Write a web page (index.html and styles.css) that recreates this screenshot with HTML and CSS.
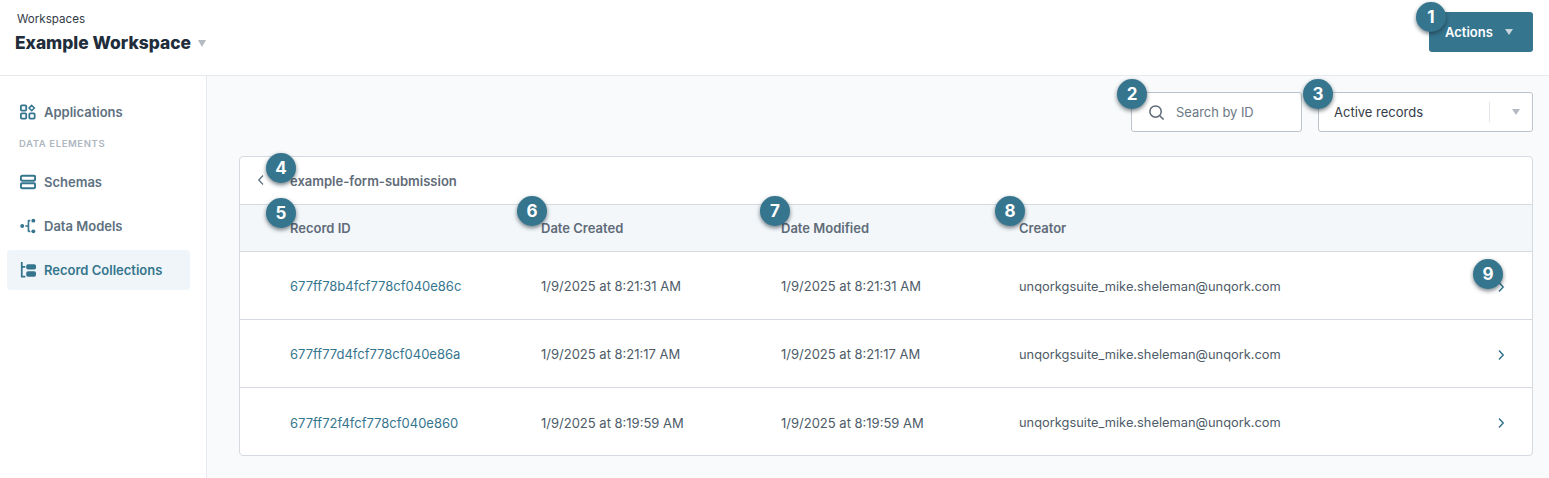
FILE: index.html
```html
<!DOCTYPE html>
<html lang="en">
<head>
<meta charset="utf-8">
<title>Record Collections</title>
<link rel="stylesheet" href="styles.css">
</head>
<body>
<header class="topbar">
  <div class="workspace">
    <div class="crumb">Workspaces</div>
    <div class="ws-name">Example Workspace <span class="caret caret-grey"></span></div>
  </div>
  <div class="anchor">
    <button class="actions">Actions <span class="caret caret-light"></span></button>
    <span class="badge b1">1</span>
  </div>
</header>
<div class="shell">
  <nav class="sidebar">
    <a class="nav-item">
      <svg class="nav-icon" viewBox="0 0 18 18" fill="none" stroke="currentColor" stroke-width="2"><rect x="1" y="1.5" width="6" height="6" rx="1"/><path d="M13.2 1.6l3 3-3 3-3-3z" stroke-width="1.7"/><rect x="1" y="10.5" width="6" height="6" rx="1"/><rect x="10.5" y="10.5" width="6" height="6" rx="1"/></svg>
      Applications
    </a>
    <div class="nav-label">DATA ELEMENTS</div>
    <a class="nav-item">
      <svg class="nav-icon" viewBox="0 0 18 18" fill="none" stroke="currentColor" stroke-width="2.2"><rect x="1" y="2" width="16" height="5.5" rx="1.5"/><rect x="1" y="10.5" width="16" height="5.5" rx="1.5"/></svg>
      Schemas
    </a>
    <a class="nav-item">
      <svg class="nav-icon" viewBox="0 0 18 18" fill="currentColor"><circle cx="2.5" cy="9" r="2.2"/><path d="M6 9h3.5M9.5 2.5v13M9.5 3h2M9.5 15h2" stroke="currentColor" stroke-width="1.8" fill="none"/><circle cx="15" cy="3" r="2.2"/><circle cx="15" cy="15" r="2.2"/></svg>
      Data Models
    </a>
    <a class="nav-item active">
      <svg class="nav-icon" viewBox="0 0 18 18" fill="currentColor"><path d="M2 0v16.5h4M2 5.5h4" fill="none" stroke="currentColor" stroke-width="2"/><rect x="7" y="2.5" width="11" height="6" rx="2"/><rect x="7" y="10.5" width="11" height="6" rx="2"/></svg>
      Record Collections
    </a>
  </nav>
  <main class="content">
    <div class="toolbar">
      <div class="anchor">
        <div class="search">
          <svg class="search-icon" viewBox="0 0 18 18" fill="none" stroke="currentColor" stroke-width="1.6"><circle cx="8" cy="8" r="6"/><path d="M12.5 12.5l4 4"/></svg>
          <span>Search by ID</span>
        </div>
        <span class="badge b2">2</span>
      </div>
      <div class="anchor">
        <div class="select">
          <span class="select-value">Active records</span>
          <span class="select-sep"></span>
          <span class="caret caret-grey"></span>
        </div>
        <span class="badge b3">3</span>
      </div>
    </div>
    <section class="card">
      <div class="title-row">
        <svg class="back" viewBox="0 0 8 12" fill="none" stroke="currentColor" stroke-width="1.3"><path d="M6 1.5L1.8 6 6 10.5"/></svg>
        <span class="title">example-form-submission</span>
        <span class="badge b4">4</span>
      </div>
      <div class="row head">
        <span>Record ID</span><span>Date Created</span><span>Date Modified</span><span>Creator</span>
        <span class="badge b5">5</span><span class="badge b6">6</span><span class="badge b7">7</span><span class="badge b8">8</span>
      </div>
      <div class="row data">
        <a class="rec">677ff78b4fcf778cf040e86c</a><span>1/9/2025 at 8:21:31 AM</span><span>1/9/2025 at 8:21:31 AM</span><span class="mail">unqorkgsuite_mike.sheleman@unqork.com</span>
        <svg class="chev" viewBox="0 0 8 12" fill="none" stroke="currentColor" stroke-width="1.5"><path d="M2 1.5L6.2 6 2 10.5"/></svg>
        <span class="badge b9">9</span>
      </div>
      <div class="row data">
        <a class="rec">677ff77d4fcf778cf040e86a</a><span>1/9/2025 at 8:21:17 AM</span><span>1/9/2025 at 8:21:17 AM</span><span class="mail">unqorkgsuite_mike.sheleman@unqork.com</span>
        <svg class="chev" viewBox="0 0 8 12" fill="none" stroke="currentColor" stroke-width="1.5"><path d="M2 1.5L6.2 6 2 10.5"/></svg>
      </div>
      <div class="row data last">
        <a class="rec">677ff72f4fcf778cf040e860</a><span>1/9/2025 at 8:19:59 AM</span><span>1/9/2025 at 8:19:59 AM</span><span class="mail">unqorkgsuite_mike.sheleman@unqork.com</span>
        <svg class="chev" viewBox="0 0 8 12" fill="none" stroke="currentColor" stroke-width="1.5"><path d="M2 1.5L6.2 6 2 10.5"/></svg>
      </div>
    </section>
  </main>
</div>
</body>
</html>
```
FILE: styles.css
```css
* { box-sizing: border-box; }
html, body { margin: 0; height: 100%; overflow: hidden; }
body { font-family: Inter, "Liberation Sans", sans-serif; background: #fff; color: #2a3644; }

.topbar { height: 76px; display: flex; justify-content: space-between; align-items: flex-start; padding: 12px 16px 0 15px; border-bottom: 1px solid #e6e9ed; background: #fff; }
.crumb { font-size: 11.6px; line-height: 14px; margin-left: 2px; color: #333c47; }
.ws-name { font-size: 17.4px; line-height: 22px; margin-top: 6px; font-weight: 800; color: #212d3b; display: flex; align-items: center; gap: 7px; }
.ws-name .caret { border-top-width: 7px; margin-top: 1px; }

.caret { display: inline-block; width: 0; height: 0; border-left: 4.5px solid transparent; border-right: 4.5px solid transparent; border-top: 6px solid #b3bac2; }
.caret-light { border-top-color: #c9d6dd; }

.anchor { position: relative; }
.actions { width: 104px; height: 40px; border: 0; border-radius: 3px; background: #36758e; color: #fff; font: 600 13px Inter, "Liberation Sans", sans-serif; display: flex; align-items: center; padding: 0 0 0 16px; gap: 12px; }

.shell { display: flex; height: 402px; }
.sidebar { width: 207px; flex: none; background: #fff; border-right: 1px solid #e6e9ed; padding: 16px 16px 0 7px; display: flex; flex-direction: column; }
.nav-item { height: 40px; margin-bottom: 4px; border-radius: 4px; display: flex; align-items: center; gap: 8px; padding-left: 13px; font-size: 13px; font-weight: 600; color: #5d7080; }
.nav-item .nav-icon { width: 16px; height: 16px; color: #36758e; flex: none; }
.nav-item.active { background: #eff5f8; color: #36758e; }
.nav-label { font-size: 9.5px; font-weight: 600; letter-spacing: .6px; line-height: 11px; color: #aeb6bf; padding-left: 12px; margin: 2px 0 13px; }

.content { flex: 1; background: #f8fafb; padding: 16px 16px 0 32px; }
.toolbar { display: flex; justify-content: flex-end; gap: 16px; height: 40px; margin-bottom: 24px; }
.search { width: 171px; height: 40px; background: #fff; border: 1px solid #bcc3cb; border-radius: 3px; display: flex; align-items: center; padding-left: 16px; gap: 11px; font-size: 12.9px; color: #6b7785; }
.search-icon { width: 17px; height: 17px; color: #5d6875; }
.select { width: 215px; height: 40px; background: #fff; border: 1px solid #bcc3cb; border-radius: 3px; display: flex; align-items: center; padding-left: 15px; font-size: 13px; color: #333c47; }
.select-value { width: 155px; }
.select-sep { width: 1px; height: 20px; background: #e3e6ea; margin-right: 22px; }

.card { background: #fff; border: 1px solid #d5dae0; border-radius: 4px; height: 300px; }
.title-row { position: relative; height: 48px; display: flex; align-items: center; padding-left: 17px; border-bottom: 1px solid #d5dae0; }
.back { width: 8px; height: 12px; color: #5d7080; margin-top: -1px; }
.title { margin: 1px 0 0 25px; font-size: 13px; font-weight: 600; color: #5f6b78; }

.row { position: relative; display: grid; grid-template-columns: 251px 240px 238px 1fr; align-items: center; padding-left: 50px; font-size: 13px; color: #4e5b68; }
.head { height: 47px; background: #f3f7fa; border-bottom: 1px solid #d5dae0; font-weight: 600; color: #5f6b78; }
.data { height: 68px; border-bottom: 1px solid #d5dae0; padding-top: 1px; }
.data.last { border-bottom: 0; }
.rec { color: #36758e; }
.mail { font-size: 12.85px; }
.chev { position: absolute; right: 27px; top: 29px; width: 8px; height: 12px; color: #36758e; }

.badge { position: absolute; z-index: 2; width: 30px; height: 30px; border-radius: 50%; background: #36758e; color: #fff; font-size: 17px; font-weight: 700; line-height: 30px; text-align: center; box-shadow: 0 2px 4px rgba(20, 40, 50, .6); }
.b1 { left: -13px; top: -10px; }
.b2 { left: -14px; top: -13px; }
.b3 { left: -15px; top: -13px; }
.b4 { left: 26px; top: -4px; }
.b5 { left: 26px; top: -7px; }
.b6 { left: 277px; top: -9px; }
.b7 { left: 520px; top: -9px; }
.b8 { left: 755px; top: -9px; }
.b9 { left: 1233px; top: 7px; }
```
